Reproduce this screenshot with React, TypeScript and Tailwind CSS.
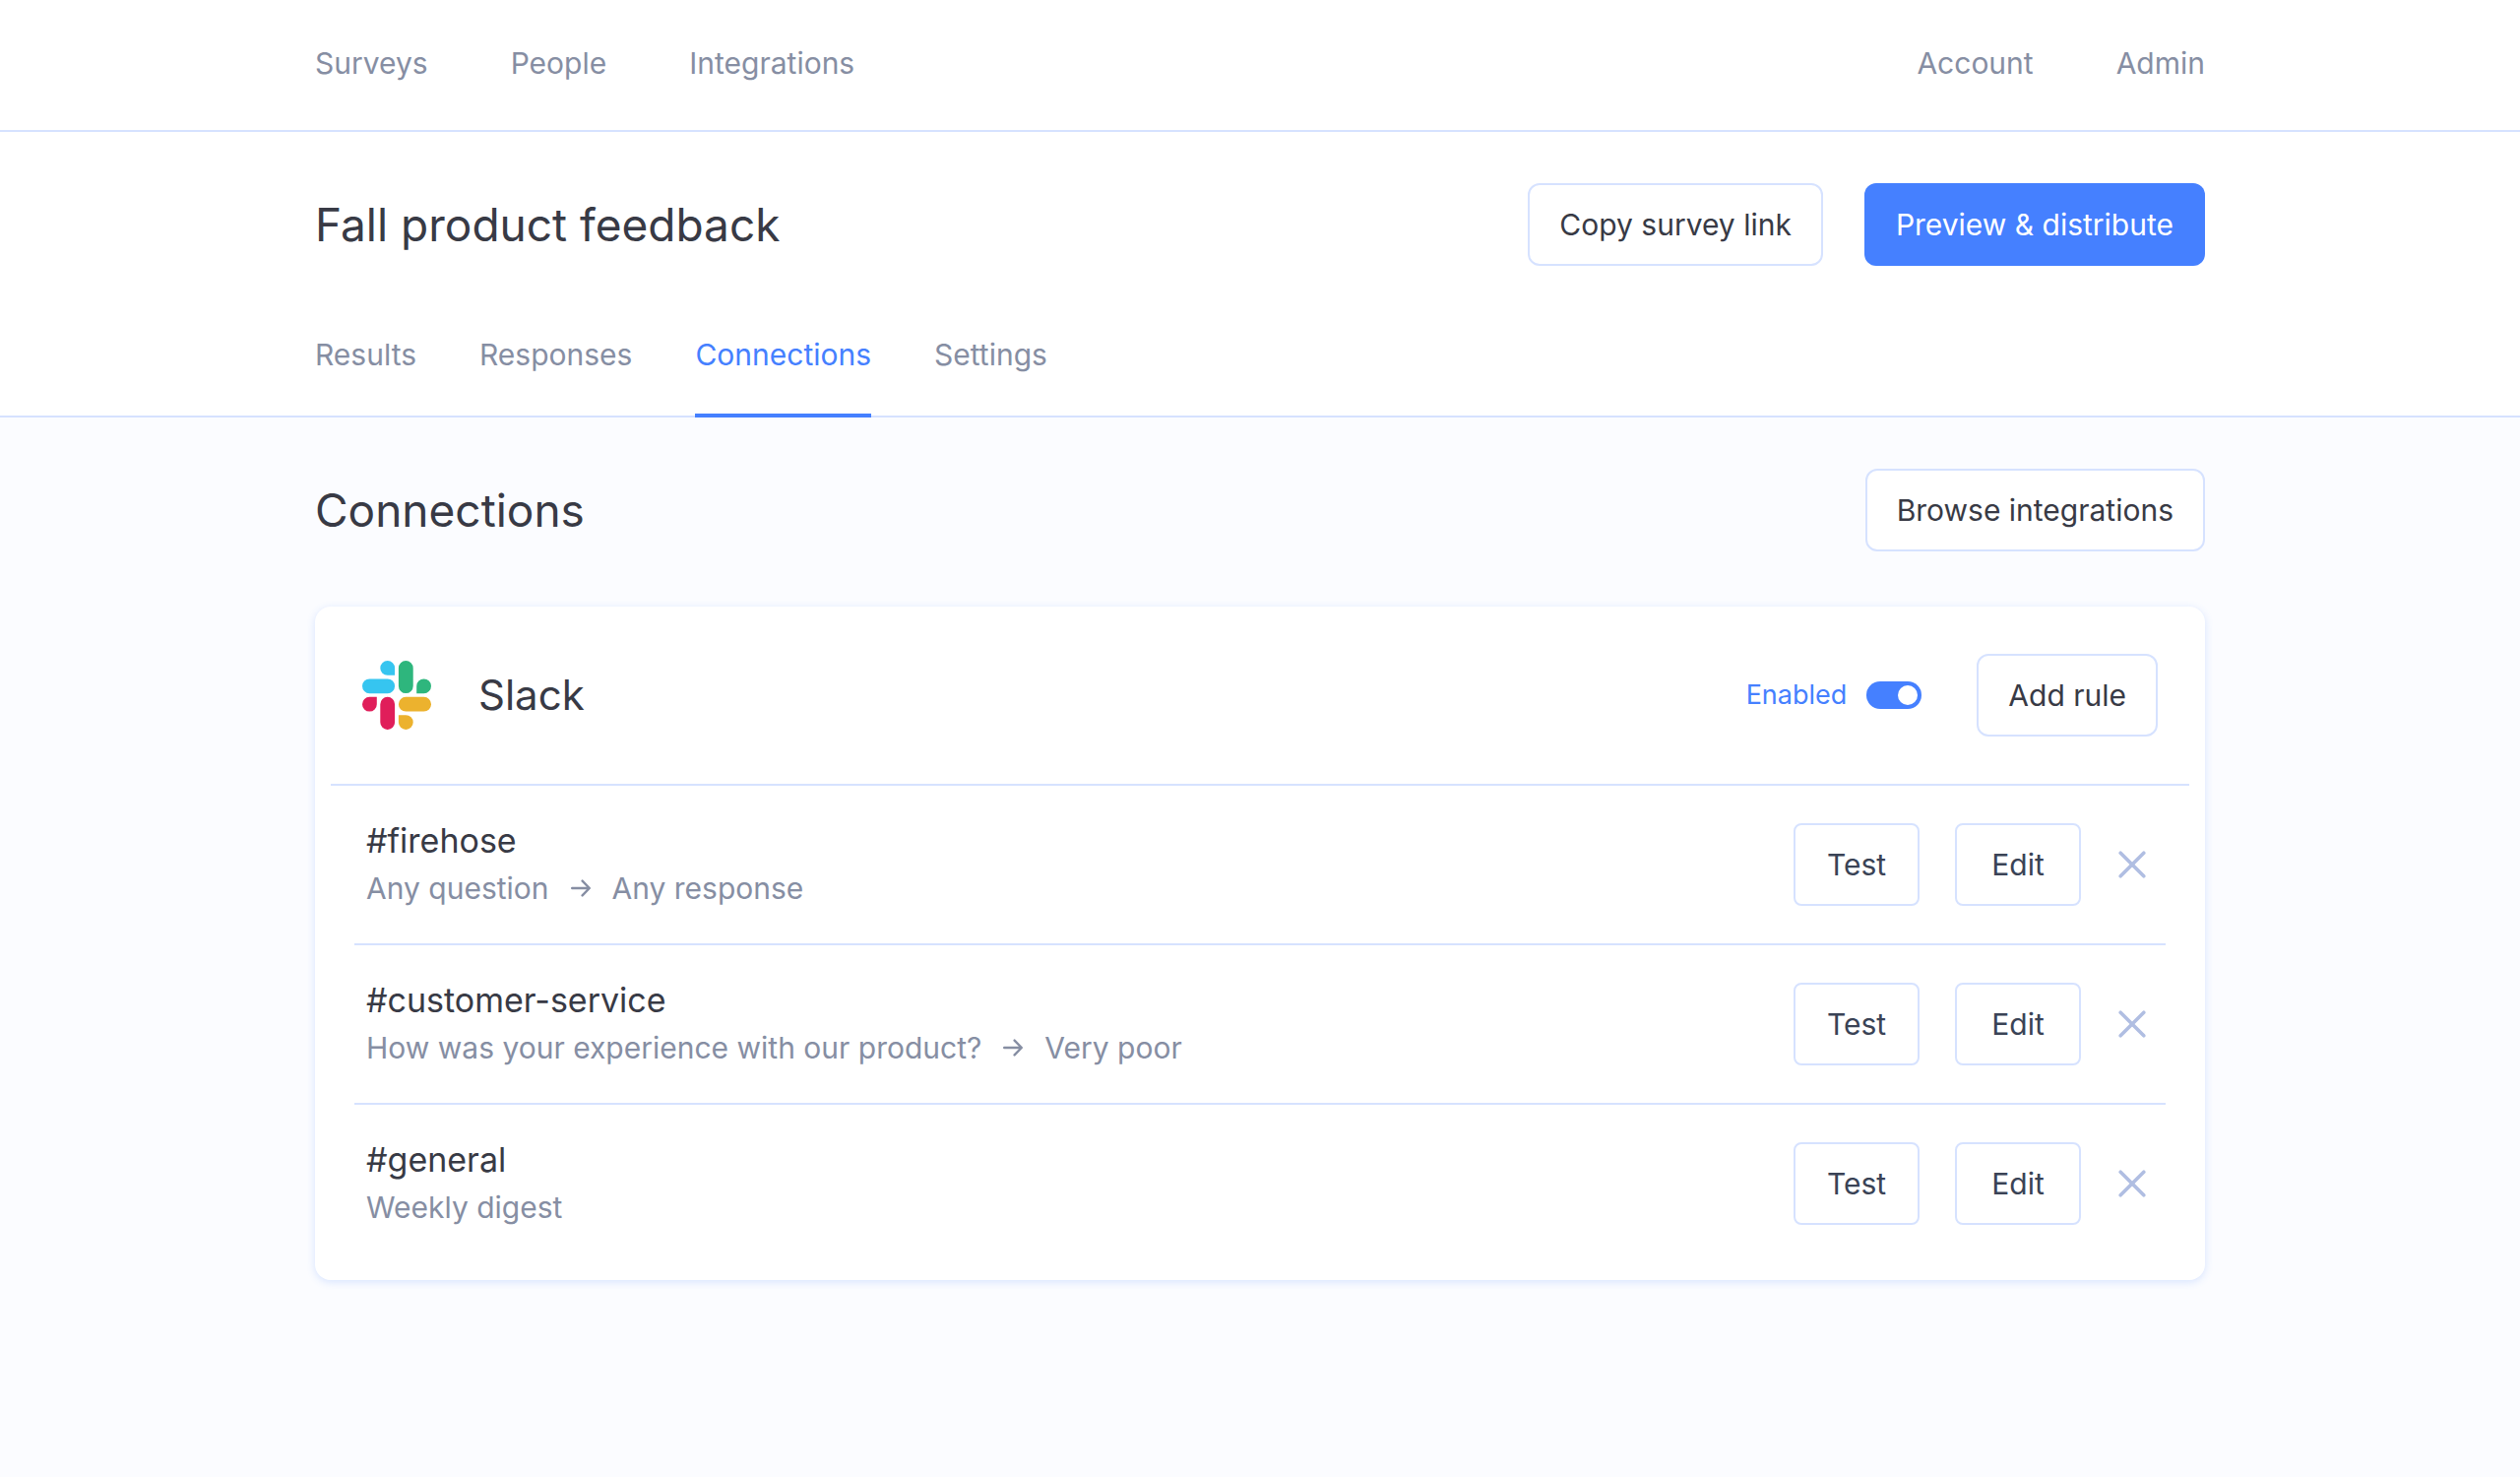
import { useState } from "react";
import type { ReactNode } from "react";

const rules = [
  { channel: "#firehose", trigger: "Any question", answer: "Any response" },
  {
    channel: "#customer-service",
    trigger: "How was your experience with our product?",
    answer: "Very poor",
  },
  { channel: "#general", trigger: "Weekly digest", answer: null },
];

function OutlineButton({ children }: { children: ReactNode }) {
  return (
    <button
      type="button"
      className="h-21 cursor-pointer rounded-xl border-2 border-[#d6e2ff] bg-white px-[30px] text-[30px] leading-10 whitespace-nowrap text-[#383a45]"
    >
      {children}
    </button>
  );
}

function RowButton({ children, label }: { children: ReactNode; label: string }) {
  return (
    <button
      type="button"
      aria-label={label}
      className="h-21 w-32 cursor-pointer rounded-lg border-2 border-[#d6e2ff] bg-white text-[30px] leading-10 text-[#3a4356]"
    >
      {children}
    </button>
  );
}

function SlackLogo() {
  return (
    <svg viewBox="0 0 70 70" className="size-[70px]" aria-hidden="true">
      <path
        fill="#36c5f0"
        d="M25.7 0a7.4 7.4 0 1 0 0 14.8h7.4V7.4A7.4 7.4 0 0 0 25.7 0ZM7.4 18.4a7.4 7.4 0 1 0 0 14.8h18.3a7.4 7.4 0 1 0 0-14.8Z"
      />
      <path
        fill="#2eb67d"
        d="M44.3 0a7.4 7.4 0 0 0-7.4 7.4v18.3a7.4 7.4 0 1 0 14.8 0V7.4A7.4 7.4 0 0 0 44.3 0ZM70 25.8a7.4 7.4 0 1 0-14.8 0v7.4h7.4a7.4 7.4 0 0 0 7.4-7.4Z"
      />
      <path
        fill="#ecb22e"
        d="M44.3 70a7.4 7.4 0 1 0 0-14.8h-7.4v7.4a7.4 7.4 0 0 0 7.4 7.4ZM62.6 51.6a7.4 7.4 0 1 0 0-14.8H44.3a7.4 7.4 0 1 0 0 14.8Z"
      />
      <path
        fill="#e01e5a"
        d="M0 44.2a7.4 7.4 0 1 0 14.8 0v-7.4H7.4A7.4 7.4 0 0 0 0 44.2ZM25.7 36.8a7.4 7.4 0 0 0-7.4 7.4v18.4a7.4 7.4 0 1 0 14.8 0V44.2a7.4 7.4 0 0 0-7.4-7.4Z"
      />
    </svg>
  );
}

function ArrowRight() {
  return (
    <svg
      viewBox="0 0 20 18"
      className="h-[18px] w-5"
      fill="none"
      stroke="currentColor"
      strokeWidth="2.4"
      strokeLinecap="round"
      strokeLinejoin="round"
      role="img"
      aria-label="then"
    >
      <path d="M1.2 9h17.4M11.6 1.6 18.8 9l-7.2 7.4" />
    </svg>
  );
}

function CloseIcon() {
  return (
    <svg
      viewBox="0 0 28 28"
      className="size-7"
      fill="none"
      stroke="#b0bee2"
      strokeWidth="3.6"
      strokeLinecap="round"
      aria-hidden="true"
    >
      <path d="M2.2 2.2 25.8 25.8M25.8 2.2 2.2 25.8" />
    </svg>
  );
}

export default function App() {
  const [enabled, setEnabled] = useState(true);

  return (
    <div className="min-h-screen bg-[#fbfcff] font-['Inter',sans-serif] text-[#383a45]">
      <header className="border-b-2 border-[#d6e2ff] bg-white">
        <nav
          aria-label="Main"
          className="mx-auto flex max-w-[1920px] justify-between pt-11 pb-12 text-[30px] leading-10 text-[#868ea3]"
        >
          <div className="flex gap-21">
            <a href="#surveys">Surveys</a>
            <a href="#people">People</a>
            <a href="#integrations">Integrations</a>
          </div>
          <div className="flex gap-21">
            <a href="#account">Account</a>
            <a href="#admin">Admin</a>
          </div>
        </nav>
      </header>

      <section className="border-b-2 border-[#d6e2ff] bg-white pt-13">
        <div className="mx-auto max-w-[1920px]">
          <div className="flex items-center justify-between">
            <h1 className="text-[46px] leading-14">Fall product feedback</h1>
            <div className="flex gap-[42px]">
              <OutlineButton>Copy survey link</OutlineButton>
              <button
                type="button"
                className="h-21 cursor-pointer rounded-xl bg-[#4580ff] px-8 text-[30px] leading-10 whitespace-nowrap text-white"
              >
                Preview &amp; distribute
              </button>
            </div>
          </div>
          <nav
            aria-label="Survey"
            className="-mb-0.5 flex gap-16 pt-[70px] text-[30px] leading-10 text-[#868ea3]"
          >
            <a href="#results" className="pb-11">Results</a>
            <a href="#responses" className="pb-11">Responses</a>
            <a
              href="#connections"
              aria-current="page"
              className="border-b-4 border-[#4580ff] pb-10 text-[#4580ff]"
            >
              Connections
            </a>
            <a href="#settings" className="pb-11">Settings</a>
          </nav>
        </div>
      </section>

      <main className="mx-auto max-w-[1920px] pt-13 pb-24">
        <div className="flex items-center justify-between">
          <h2 className="text-[46px] leading-14">Connections</h2>
          <OutlineButton>Browse integrations</OutlineButton>
        </div>

        <section
          aria-labelledby="slack-heading"
          className="mt-14 rounded-2xl bg-white px-4 pb-[18px] shadow-[0_2px_8px_rgba(69,128,255,0.2)]"
        >
          <div className="flex items-center border-b-2 border-[#d6e2ff] px-8 py-12">
            <SlackLogo />
            <h3 id="slack-heading" className="ml-12 text-[42px] leading-14">
              Slack
            </h3>
            <div className="ml-auto flex items-center gap-14">
              <label className="flex cursor-pointer items-center gap-5 text-[27px] leading-10 text-[#4580ff]">
                Enabled
                <input
                  type="checkbox"
                  role="switch"
                  checked={enabled}
                  onChange={(event) => setEnabled(event.target.checked)}
                  className="h-7 w-14 cursor-pointer appearance-none rounded-full bg-[#b0bee2] p-1 before:block before:size-5 before:rounded-full before:bg-white checked:bg-[#4580ff] checked:before:ml-7"
                />
              </label>
              <OutlineButton>Add rule</OutlineButton>
            </div>
          </div>

          <ul className="mx-6 divide-y-2 divide-[#d6e2ff]">
            {rules.map((rule) => (
              <li
                key={rule.channel}
                className="flex items-center justify-between py-8 pr-5 pl-3"
              >
                <div>
                  <h4 className="text-[34px] leading-12">{rule.channel}</h4>
                  <p className="flex items-center gap-[22px] text-[30px] leading-12 text-[#868ea3]">
                    {rule.trigger}
                    {rule.answer && (
                      <>
                        <ArrowRight />
                        {rule.answer}
                      </>
                    )}
                  </p>
                </div>
                <div className="flex items-center gap-9">
                  <RowButton label={`Test ${rule.channel}`}>Test</RowButton>
                  <RowButton label={`Edit ${rule.channel}`}>Edit</RowButton>
                  <button
                    type="button"
                    aria-label={`Remove ${rule.channel}`}
                    className="cursor-pointer pl-0.5"
                  >
                    <CloseIcon />
                  </button>
                </div>
              </li>
            ))}
          </ul>
        </section>
      </main>
    </div>
  );
}
